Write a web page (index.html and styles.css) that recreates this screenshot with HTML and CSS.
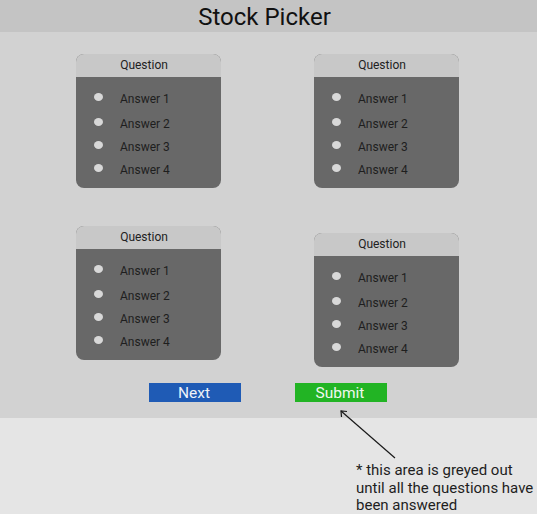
FILE: index.html
```html
<!DOCTYPE html>
<html>
<head>
<meta charset="utf-8">
<link rel="stylesheet" href="styles.css">
</head>
<body>
<header class="topbar"><h1 class="title">Stock Picker</h1></header>
<main class="main">
  <div class="grid">
    <div class="card">
      <div class="card-head">Question</div>
      <ul class="answers">
        <li class="answer"><span class="dot"></span><span>Answer 1</span></li>
        <li class="answer"><span class="dot"></span><span>Answer 2</span></li>
        <li class="answer"><span class="dot"></span><span>Answer 3</span></li>
        <li class="answer"><span class="dot"></span><span>Answer 4</span></li>
      </ul>
    </div>
    <div class="card">
      <div class="card-head">Question</div>
      <ul class="answers">
        <li class="answer"><span class="dot"></span><span>Answer 1</span></li>
        <li class="answer"><span class="dot"></span><span>Answer 2</span></li>
        <li class="answer"><span class="dot"></span><span>Answer 3</span></li>
        <li class="answer"><span class="dot"></span><span>Answer 4</span></li>
      </ul>
    </div>
    <div class="card">
      <div class="card-head">Question</div>
      <ul class="answers">
        <li class="answer"><span class="dot"></span><span>Answer 1</span></li>
        <li class="answer"><span class="dot"></span><span>Answer 2</span></li>
        <li class="answer"><span class="dot"></span><span>Answer 3</span></li>
        <li class="answer"><span class="dot"></span><span>Answer 4</span></li>
      </ul>
    </div>
    <div class="card card-shift">
      <div class="card-head">Question</div>
      <ul class="answers">
        <li class="answer"><span class="dot"></span><span>Answer 1</span></li>
        <li class="answer"><span class="dot"></span><span>Answer 2</span></li>
        <li class="answer"><span class="dot"></span><span>Answer 3</span></li>
        <li class="answer"><span class="dot"></span><span>Answer 4</span></li>
      </ul>
    </div>
  </div>
  <div class="actions">
    <button class="btn btn-next">Next</button>
    <button class="btn btn-submit">Submit</button>
  </div>
</main>
<footer class="footer">
  <p class="note">* this area is greyed out until all the questions have been answered</p>
</footer>
<svg class="arrow" width="60" height="54" viewBox="0 0 60 54">
  <line x1="2" y1="2" x2="56" y2="49" stroke="#1a1a1a" stroke-width="1.2"/>
  <polyline points="2.5,8 2,2 8,2.5" fill="none" stroke="#1a1a1a" stroke-width="1.2"/>
</svg>
</body>
</html>
```
FILE: styles.css
```css
* { box-sizing: border-box; }
html, body { margin: 0; padding: 0; }
body {
  width: 537px;
  height: 514px;
  overflow: hidden;
  position: relative;
  font-family: Roboto, "Liberation Sans", sans-serif;
  color: #1e1e1e;
  background: #e5e5e5;
}
.topbar {
  height: 32px;
  background: #c4c4c4;
  display: flex;
  justify-content: center;
  padding-right: 8px;
}
.title {
  margin: 0;
  padding-top: 1px;
  font-size: 24px;
  font-weight: 400;
  line-height: 32px;
  color: #111;
}
.main {
  background: #d2d2d2;
  padding: 22px 0 16px;
}
.grid {
  display: grid;
  grid-template-columns: 145px 145px;
  column-gap: 93px;
  row-gap: 38px;
  padding-left: 76px;
  align-items: start;
}
.card {
  width: 145px;
  height: 134px;
  border-radius: 8px;
  overflow: hidden;
  background: #686868;
}
.card-shift { margin-top: 7px; }
.card-head {
  height: 23px;
  background: #c8c8c8;
  text-align: center;
  padding-right: 9px;
  font-size: 12px;
  line-height: 23px;
  color: #222;
}
.answers {
  list-style: none;
  margin: 0;
  padding: 11px 0 0 18px;
}
.answer {
  display: flex;
  align-items: flex-start;
  height: 23px;
  font-size: 12px;
  line-height: 23px;
  color: #1e1e1e;
}
.answer:first-child { margin-bottom: 2px; }
.dot {
  width: 9px;
  height: 8px;
  margin-top: 5px;
  margin-right: 17px;
  border-radius: 50%;
  background: #d8d8d8;
}
.actions {
  display: flex;
  justify-content: center;
  gap: 54px;
  margin-top: 16px;
  padding-right: 1px;
}
.btn {
  width: 92px;
  height: 19px;
  border: 0;
  padding: 2px 2px 0 0;
  font-family: Roboto, "Liberation Sans", sans-serif;
  font-size: 15.5px;
  line-height: 17px;
  color: #eef2f8;
}
.btn-next { background: #1f5bb5; }
.btn-submit { background: #22b424; color: #f0f8f0; }
.footer {
  height: 96px;
  padding: 44px 0 0 356px;
}
.note {
  width: 181px;
  margin: 0;
  font-size: 15px;
  line-height: 17.5px;
  color: #1e1e1e;
}
.arrow {
  position: absolute;
  left: 339px;
  top: 409px;
}
```
